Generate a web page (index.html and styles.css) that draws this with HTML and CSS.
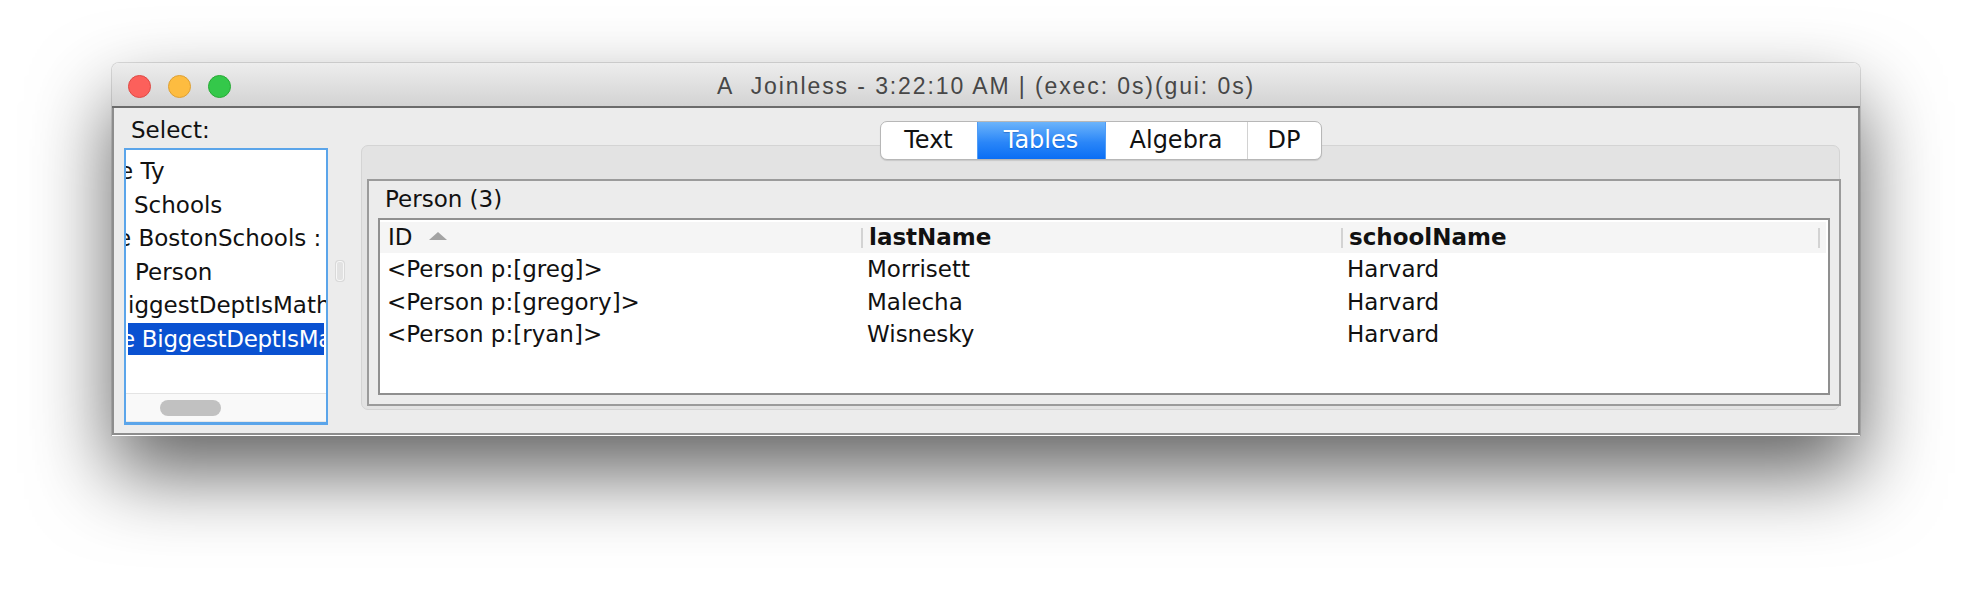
FILE: index.html
```html
<!DOCTYPE html>
<html>
<head>
<meta charset="utf-8">
<title>Joinless</title>
<link rel="stylesheet" href="styles.css">
</head>
<body>
<div class="window">
  <div class="titlebar">
    <div class="lights">
      <span class="light red"></span>
      <span class="light yellow"></span>
      <span class="light green"></span>
    </div>
    <div class="title">A&nbsp; Joinless - 3:22:10 AM | (exec: 0s)(gui: 0s)</div>
    <div></div>
  </div>
  <div class="content">
    <div class="left">
      <div class="select-label">Select:</div>
      <div class="list">
        <div class="rows">
          <div class="row off-e1">e Ty</div>
          <div class="row off-s">Schools</div>
          <div class="row off-e2">e BostonSchools : Schools</div>
          <div class="row off-p">Person</div>
          <div class="row off-i">iggestDeptIsMath</div>
          <div class="row selected off-e1">e BiggestDeptIsMath</div>
        </div>
        <div class="hscroll"><div class="thumb"></div></div>
      </div>
    </div>
    <div class="splitter"><div class="grip"></div></div>
    <div class="right">
      <div class="tabs">
        <div class="segmented">
          <div class="seg seg-text">Text</div>
          <div class="seg seg-tables active">Tables</div>
          <div class="seg seg-algebra">Algebra</div>
          <div class="seg seg-dp">DP</div>
        </div>
      </div>
      <div class="pane">
        <div class="group">
          <div class="group-title">Person (3)</div>
          <div class="table">
            <div class="thead">
              <div class="th th-id">ID<span class="sort-up"></span></div>
              <div class="th sep bold">lastName</div>
              <div class="th sep bold">schoolName</div>
              <div class="th sep"></div>
            </div>
            <div class="tr">
              <div class="td">&lt;Person p:[greg]&gt;</div>
              <div class="td">Morrisett</div>
              <div class="td">Harvard</div>
              <div class="td"></div>
            </div>
            <div class="tr">
              <div class="td">&lt;Person p:[gregory]&gt;</div>
              <div class="td">Malecha</div>
              <div class="td">Harvard</div>
              <div class="td"></div>
            </div>
            <div class="tr">
              <div class="td">&lt;Person p:[ryan]&gt;</div>
              <div class="td">Wisnesky</div>
              <div class="td">Harvard</div>
              <div class="td"></div>
            </div>
          </div>
        </div>
      </div>
    </div>
  </div>
</div>
</body>
</html>
```

FILE: styles.css
```css
* { box-sizing: border-box; }
html, body { margin: 0; padding: 0; background: #ffffff; }
body {
  width: 1972px;
  height: 598px;
  overflow: hidden;
  font-family: "DejaVu Sans", "Liberation Sans", sans-serif;
  color: #111;
}

.window {
  width: 1748px;
  margin: 63px 0 0 112px;
  border-radius: 7px 7px 0 0;
  box-shadow: 0 38px 80px rgba(0, 0, 0, 0.62), 0 0 0 1px rgba(0, 0, 0, 0.12);
}

.titlebar {
  height: 45px;
  padding-top: 3px;
  display: grid;
  grid-template-columns: 1fr auto 1fr;
  align-items: center;
  background: linear-gradient(#ededed, #d3d3d3);
  border-bottom: 2px solid #6b6b6b;
  border-radius: 7px 7px 0 0;
}
.lights { display: flex; gap: 17px; padding-left: 16px; }
.light { width: 23px; height: 23px; border-radius: 50%; }
.red { background: #fc605b; border: 1px solid #de4a45; }
.yellow { background: #fdbc40; border: 1px solid #dea033; }
.green { background: #34c84a; border: 1px solid #27aa35; }
.title {
  font-family: "Liberation Sans", sans-serif;
  font-size: 23px;
  letter-spacing: 1.9px;
  color: #474747;
}

.content {
  display: flex;
  height: 327px;
  background: #ececec;
  border: 2px solid #8d8d8d;
  border-top: none;
  box-shadow: 0 1px 0 #ffffff;
}

.left {
  width: 204px;
  margin-left: 10px;
  padding-top: 8px;
  display: flex;
  flex-direction: column;
}
.select-label {
  height: 28px;
  line-height: 28px;
  padding-left: 7px;
  font-size: 23px;
  color: #111;
}
.list {
  margin-top: 4px;
  height: 277px;
  background: #fff;
  border: 2px solid #5ba5ea;
  border-bottom-width: 3px;
  display: flex;
  flex-direction: column;
}
.rows {
  flex: 1;
  overflow: hidden;
  padding-top: 5px;
}
.row {
  height: 33.6px;
  line-height: 33.6px;
  font-size: 23px;
  white-space: nowrap;
  overflow: hidden;
  color: #111;
}
.row.selected {
  margin: 0 2px;
  background: #0a51d1;
  color: #fff;
  height: 32px;
  line-height: 32px;
  letter-spacing: -0.3px;
}
.off-e1 { text-indent: -7px; }
.off-e2 { text-indent: -9px; }
.off-s { text-indent: 8px; }
.off-p { text-indent: 9px; }
.off-i { text-indent: 2px; }

.hscroll {
  height: 29px;
  background: #f9f9f9;
  border-top: 1px solid #e4e4e4;
  border-bottom: 1px solid #e8e8e8;
  padding: 6px 0 0 34px;
}
.thumb {
  width: 61px;
  height: 16px;
  border-radius: 8px;
  background: #c1c1c1;
}

.splitter {
  width: 33px;
  display: flex;
  align-items: center;
  padding-left: 8px;
}
.grip {
  width: 8px;
  height: 20px;
  border-radius: 3px;
  background: #e2e2e2;
  border: 1px solid #f7f7f7;
  box-shadow: 0 0 0 1px #d9d9d9;
}

.right {
  width: 1479px;
  padding-top: 13px;
}
.tabs {
  display: flex;
  justify-content: center;
  margin-bottom: -15px;
  position: relative;
  z-index: 1;
}
.segmented {
  display: flex;
  height: 39px;
  background: #fff;
  border: 1px solid #b7b7b7;
  border-radius: 7px;
  overflow: hidden;
  box-shadow: 0 1px 1px rgba(0, 0, 0, 0.12);
}
.seg {
  text-align: center;
  font-size: 24px;
  line-height: 37px;
  color: #111;
  border-left: 1px solid #d2d2d2;
}
.seg:first-child { border-left: none; }
.seg-text { width: 96px; }
.seg-tables { width: 128px; }
.seg-algebra { width: 142px; }
.seg-dp { width: 74px; }
.seg.active {
  background: linear-gradient(#6cb4fb, #2a86f8 55%, #0a6ef5);
  color: #fff;
  border-left-color: #4f9cf7;
  text-shadow: 0 1px 1px rgba(0, 50, 140, 0.35);
}
.seg.active + .seg { border-left-color: #4f9cf7; }

.pane {
  height: 265px;
  background: #e3e3e3;
  border: 1px solid #d4d4d4;
  border-radius: 7px;
  padding: 33px 4px 3px 5px;
  display: flex;
}
.group {
  flex: 1;
  background: #ececec;
  border: 2px solid #9b9b9b;
  padding: 0 9px 9px 9px;
  display: flex;
  flex-direction: column;
}
.group-title {
  height: 37px;
  line-height: 37px;
  padding-left: 7px;
  font-size: 23px;
  color: #111;
}
.table {
  flex: 1;
  background: #fff;
  border: 2px solid #8f8f8f;
  font-size: 23px;
}
.thead, .tr {
  display: grid;
  grid-template-columns: 481px 480px 477px 1fr;
}
.thead {
  margin-top: 2px;
  height: 31px;
  background: #f5f5f5;
  margin-right: 2px;
}
.th {
  line-height: 31px;
  padding-left: 8px;
  white-space: nowrap;
  display: flex;
  align-items: center;
}
.th.bold { font-weight: bold; }
.th.sep {
  background: linear-gradient(#d3d3d3, #d3d3d3) no-repeat left center / 2px 20px;
}
.sort-up {
  display: inline-block;
  width: 0;
  height: 0;
  margin-left: 16px;
  margin-top: -3px;
  border-left: 9px solid transparent;
  border-right: 9px solid transparent;
  border-bottom: 8px solid #a3a3a3;
}
.tr { height: 32.5px; }
.td {
  line-height: 32.5px;
  padding-left: 6px;
  white-space: nowrap;
  color: #111;
}
.tr .td:first-child { padding-left: 7px; }
```
